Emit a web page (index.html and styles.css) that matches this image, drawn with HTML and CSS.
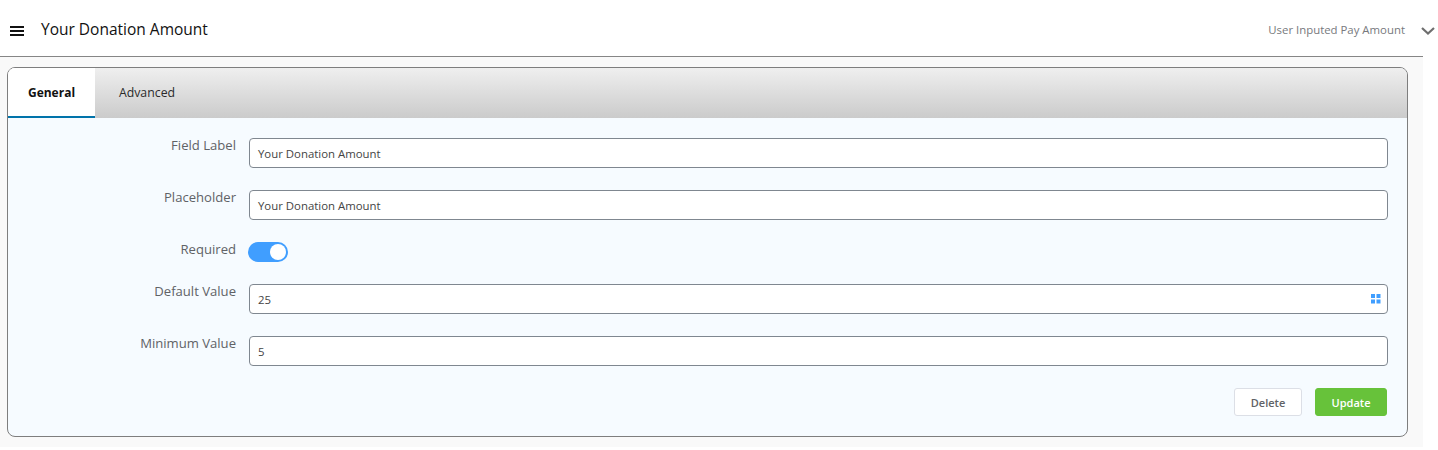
FILE: index.html
```html
<!DOCTYPE html>
<html lang="en">
<head>
<meta charset="utf-8">
<title>Your Donation Amount</title>
<link rel="stylesheet" href="styles.css">
</head>
<body>
<div class="page">
  <div class="panel">
    <header class="head">
      <svg class="burger" width="16" height="12" viewBox="0 0 16 12"><path d="M1 2h14M1 6h14M1 10h14" stroke="#111" stroke-width="2"/></svg>
      <span class="title">Your Donation Amount</span>
      <span class="kind">User Inputed Pay Amount</span>
    </header>
    <div class="work">
      <section class="card">
        <nav class="tabs">
          <span class="tab active">General</span>
          <span class="tab">Advanced</span>
        </nav>
        <form class="form">
          <div class="row"><label class="lab">Field Label</label><div class="field">Your Donation Amount</div></div>
          <div class="row"><label class="lab">Placeholder</label><div class="field">Your Donation Amount</div></div>
          <div class="row short"><label class="lab">Required</label><span class="toggle"><span class="knob"></span></span></div>
          <div class="row"><label class="lab">Default Value</label><div class="field">25
            <svg class="grid" width="10" height="10" viewBox="0 0 10 10"><path fill="#409eff" d="M0 0h4v4H0zM5.500 0h4v4h-4zM0 5.500h4v4H0zM5.500 5.500h4v4h-4z"/></svg></div></div>
          <div class="row"><label class="lab">Minimum Value</label><div class="field">5</div></div>
          <div class="actions">
            <button type="button" class="btn del">Delete</button>
            <button type="button" class="btn upd">Update</button>
          </div>
        </form>
      </section>
    </div>
  </div>
  <svg class="chev" width="16" height="10" viewBox="0 0 16 10"><path d="M2 2l6 5.500L14 2" fill="none" stroke="#6e6e6e" stroke-width="2.200"/></svg>
</div>
</body>
</html>
```
FILE: styles.css
```css
* { box-sizing: border-box; }
html, body { margin: 0; background: #fff; }
body { font-family: "Open Sans", "Noto Sans", sans-serif; height: 450px; overflow: hidden; }
.page { position: relative; width: 1438px; height: 450px; }
.panel { width: 1423px; }
.head { height: 57px; display: flex; align-items: center; padding: 3px 0 0 9px; background: #fff; border-bottom: 1px solid #868686; }
.burger { margin-right: 16px; margin-top: 2px; }
.title { font-size: 15.500px; font-weight: 500; color: #111; margin-top: -2px; }
.kind { margin-left: auto; margin-right: 18px; font-size: 11.400px; color: #77797d; }
.chev { position: absolute; left: 1420px; top: 26px; }
.work { height: 390px; padding: 10px 15px 10px 7px; background: #f9f9f9; }
.card { height: 370px; border: 1px solid #7e7e7e; border-radius: 8px; background: #f6fbff; overflow: hidden; }
.tabs { display: flex; height: 50px; background: linear-gradient(#efefef, #cbcbcb); }
.tab { width: 87px; display: flex; align-items: center; justify-content: center; font-size: 12.300px; color: #2b2b2b; padding-left: 15px; padding-bottom: 2px; }
.tab.active { background: #fff; color: #111; font-size: 12px; font-weight: 700; padding: 0; border-bottom: 2px solid #0073aa; margin-right: 1px; }
.form { padding: 20px 19px 0 0; }
.row { display: flex; align-items: flex-start; height: 30px; margin-bottom: 22px; }
.row.short { height: 20px; margin-bottom: 22px; }
.lab { width: 228px; text-align: right; font-size: 13.100px; line-height: 14px; color: #606266; margin-right: 13px; }
.field { flex: 1; height: 30px; display: flex; align-items: center; justify-content: space-between; padding: 1px 8px 0; background: #fff; border: 1px solid #7f8790; border-radius: 4px; font-size: 11.400px; color: #444; }
.grid { margin-right: -2px; margin-top: -1px; }
.toggle { display: block; position: relative; width: 40px; height: 20px; margin-left: -1px; border-radius: 10px; background: #409eff; }
.knob { position: absolute; right: 2px; top: 2px; width: 16px; height: 16px; border-radius: 50%; background: #fff; }
.actions { display: flex; justify-content: flex-end; gap: 13px; padding-right: 1px; }
.btn { height: 28px; font: 600 11px "Open Sans", "Noto Sans", sans-serif; border-radius: 3px; padding: 0; }
.del { width: 68px; background: #fff; border: 1px solid #dcdfe6; color: #606266; }
.upd { width: 72px; background: #67c23a; border: 1px solid #67c23a; color: #fff; }
```
